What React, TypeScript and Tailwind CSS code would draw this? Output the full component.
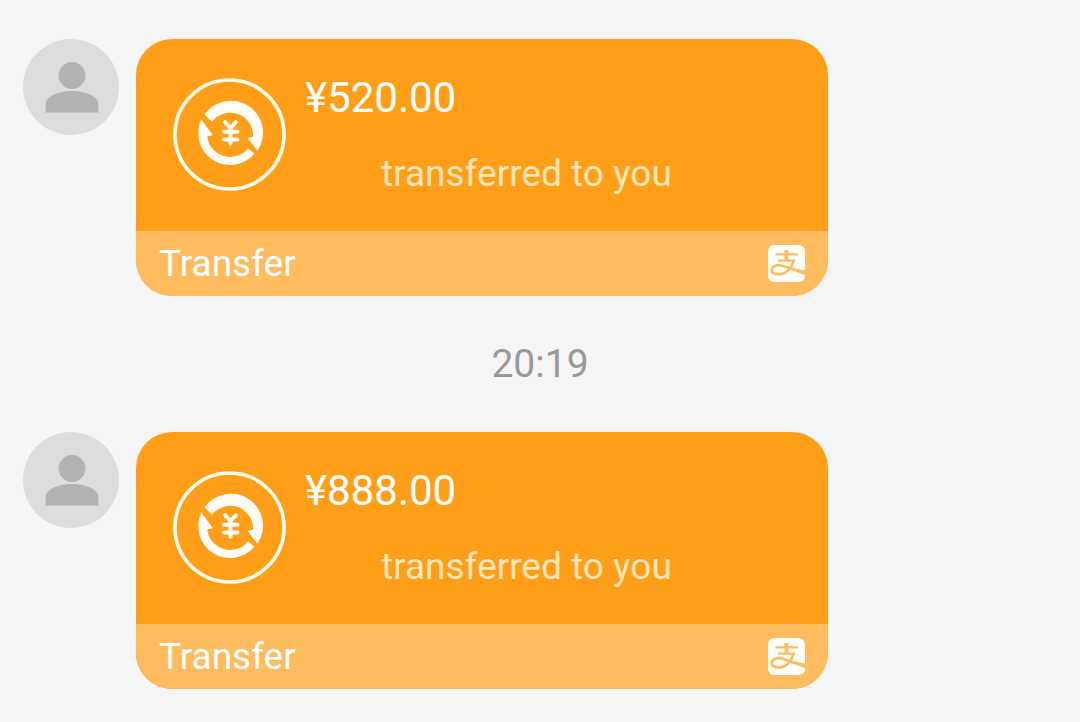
const transfers = [
  { amount: '¥520.00', note: 'transferred to you' },
  { amount: '¥888.00', note: 'transferred to you' },
]

function Avatar() {
  return (
    <div className="w-24 h-24 shrink-0 rounded-full bg-[#dddddd] overflow-hidden">
      <svg className="w-full h-full" viewBox="0 0 96 96" fill="#b3b3b3">
        <circle cx="49" cy="36.500" r="13.500" />
        <path d="M22.500 73.500V66c0-9.500 14-14 26.500-14s26.500 4.500 26.500 14v7.500z" />
      </svg>
    </div>
  )
}

function TransferIcon() {
  return (
    <svg className="w-[113px] h-[113px] shrink-0" viewBox="24 24 340 340" fill="none">
      <circle cx="194" cy="194" r="164" stroke="#fffbea" strokeWidth="11" />
      <g fill="#fffdf6">
        <path d="M119 134A96 96 0 0 1 278 243L248 204L265 201A69 69 0 0 0 141 156Z" />
        <path d="M269 252A96 96 0 0 1 109 149L144 196L127 199A69 69 0 0 0 250 235Z" />
      </g>
      <path
        d="M181 157L197 175L213 157M197 175V222M177 186H218M177 209H218"
        stroke="#fffdf6"
        strokeWidth="12"
        strokeLinecap="round"
        strokeLinejoin="round"
      />
    </svg>
  )
}

function PayLogo() {
  return (
    <svg className="w-[37px] h-[37px]" viewBox="39 30 111 111" fill="none" role="img" aria-label="Alipay">
      <rect x="39" y="30" width="111" height="111" rx="18" fill="#fffdf8" />
      <g stroke="#ffbc5e" strokeWidth="7">
        <path d="M62 58H129M69 77H120" />
        <path d="M94 45V76" strokeWidth="11" />
        <path d="M116 75C109 101 92 118 70 118C55 118 49 111 50 104C52 92 68 88 82 92C96 96 108 101 120 105" strokeWidth="8" />
      </g>
      <path d="M98 94C116 101 133 104 150 106V120C133 115 114 107 96 100Z" fill="#ffbc5e" />
    </svg>
  )
}

function TransferMessage({ amount, note }: { amount: string; note: string }) {
  return (
    <div className="flex items-start gap-[17px]">
      <Avatar />
      {/* Transfer card */}
      <div className="flex-1 max-w-[692px] rounded-[36px] overflow-hidden bg-[#ff9f19]">
        <div className="flex items-start gap-[19px] h-48 px-[37px] pt-[39px]">
          <TransferIcon />
          <div className="-mt-1">
            <p className="text-[42px] leading-12 text-white">{amount}</p>
            <p className="mt-7 pl-[76px] text-[37px] leading-12 text-[#ffe6b8]">{note}</p>
          </div>
        </div>
        <div className="flex items-center justify-between h-[65px] px-[23px] bg-[#ffbc5e]">
          <span className="text-[37px] leading-12 text-white">Transfer</span>
          <PayLogo />
        </div>
      </div>
    </div>
  )
}

export default function App() {
  return (
    <div className="min-h-screen bg-[#f5f5f5] px-[23px] pt-[39px] pb-8" style={{ fontFamily: 'Roboto, sans-serif' }}>
      <TransferMessage {...transfers[0]} />
      <p className="py-11 text-center text-[39px] leading-12 text-[#999999]">20:19</p>
      <TransferMessage {...transfers[1]} />
    </div>
  )
}
